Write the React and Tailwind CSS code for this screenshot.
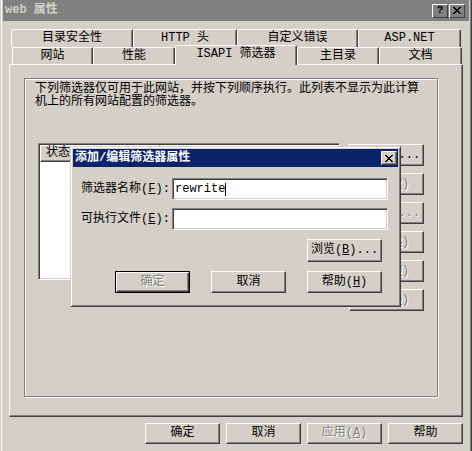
import React from "react";

const raised =
  "border border-t-white border-l-white border-r-[#404040] border-b-[#404040] shadow-[inset_-1px_-1px_0_#808080]";
const sunken =
  "border border-t-[#808080] border-l-[#808080] border-r-white border-b-white shadow-[inset_1px_1px_0_#404040,inset_-1px_-1px_0_#d4d0c8]";
const grayText = "text-[#808080] [text-shadow:1px_1px_0_#fff]";

const Key = ({ k }) => (
  <>
    (<span className="underline">{k}</span>)
  </>
);

// 经典 Win2000 按钮
const Btn = ({ children, w = "w-[75px]", h = "h-[22px]", disabled, isDefault }) => (
  <div
    className={
      `${w} ${h} flex items-center justify-center shrink-0 whitespace-nowrap ` +
      (isDefault
        ? "border border-black shadow-[inset_1px_1px_0_#fff,inset_-1px_-1px_0_#404040,inset_-2px_-2px_0_#808080] "
        : raised + " ") +
      (disabled ? grayText : "text-black")
    }
  >
    {children}
  </div>
);

const tab =
  "flex items-center justify-center shrink-0 bg-[#d4d0c8] border-l border-t border-r border-l-white border-t-white border-r-[#404040] shadow-[inset_-1px_0_0_#808080] rounded-t-[2px]";

const CloseGlyph = () => (
  <svg width="8" height="7" viewBox="0 0 8 7" shapeRendering="crispEdges">
    <path d="M0 0h2v1h1v1h2V1h1V0h2v1H7v1H6v1H5v1h1v1h1v1h1v1H6V6H5V5H3v1H2v1H0V6h1V5h1V4h1V3H2V2H1V1H0z" fill="#000" />
  </svg>
);

export default function App() {
  return (
    <div className="relative w-[472px] h-[451px] overflow-hidden bg-[#d4d0c8] text-[12px] leading-[13px] text-black font-[family-name:'Liberation_Mono','Noto_Sans_CJK_SC',monospace] shadow-[inset_1px_0_0_#d4d0c8,inset_2px_0_0_#fff,inset_-1px_0_0_#404040,inset_-2px_0_0_#808080]">
      {/* 标题栏 (非活动) */}
      <div className="mx-[3px] h-[21px] bg-[#808080] flex items-center justify-between pl-[2px] pr-[4px]">
        <span className="font-bold text-[#d4d0c8]">web 属性</span>
        <div className="flex gap-[1px]">
          <div className={`${raised} w-[16px] h-[14px] flex items-center justify-center font-bold text-[11px] leading-none`}>?</div>
          <div className={`${raised} w-[16px] h-[14px] flex items-center justify-center`}>
            <CloseGlyph />
          </div>
        </div>
      </div>

      <div className="ml-[9px] w-[454px]">
        {/* 选项卡 第一行 */}
        <div className="mt-[8px] flex ml-[2px] h-[18px]">
          <div className={`${tab} w-[122px]`}>目录安全性</div>
          <div className={`${tab} w-[104px]`}>HTTP 头</div>
          <div className={`${tab} w-[121px]`}>自定义错误</div>
          <div className={`${tab} w-[103px]`}>ASP.NET</div>
        </div>
        {/* 选项卡 第二行 */}
        <div className="flex items-end ml-[3px] h-[17px]">
          <div className={`${tab} w-[81px] h-[17px]`}>网站</div>
          <div className={`${tab} w-[82px] h-[17px]`}>性能</div>
          <div className={`${tab} w-[122px] h-[20px] -mb-[1px] relative z-10 pb-[2px]`}>ISAPI 筛选器</div>
          <div className={`${tab} w-[82px] h-[17px]`}>主目录</div>
          <div className={`${tab} w-[83px] h-[17px]`}>文档</div>
        </div>

        {/* 面板 */}
        <div className={`${raised} h-[353px]`}>
          <div className="ml-[14px] mt-[13px] w-[414px] h-[319px] border border-[#808080] shadow-[1px_1px_0_#fff,inset_1px_1px_0_#fff]">
            <p className="pl-[10px] pt-[4px]">
              下列筛选器仅可用于此网站，并按下列顺序执行。此列表不显示为此计算
              <br />
              机上的所有网站配置的筛选器。
            </p>
            <div className="mt-[34px] pl-[13px] flex gap-[9px] items-start">
              <div className={`${sunken} w-[302px] h-[137px] bg-white p-[1px]`}>
                <div className={`${raised} bg-[#d4d0c8] w-[120px] h-[17px] flex items-center pl-[5px]`}>状态</div>
              </div>
              <div className="mt-[1px] flex flex-col gap-[7px]">
                <Btn>添加<Key k="D" />...</Btn>
                <Btn disabled>删除<Key k="R" /></Btn>
                <Btn disabled>编辑<Key k="I" />...</Btn>
                <Btn disabled>禁用<Key k="B" /></Btn>
                <Btn disabled>上移<Key k="U" /></Btn>
                <Btn disabled>下移<Key k="O" /></Btn>
              </div>
            </div>
          </div>
        </div>

        {/* 底部按钮 */}
        <div className="mt-[6px] flex justify-end gap-[6px]">
          <Btn h="h-[21px]">确定</Btn>
          <Btn h="h-[21px]">取消</Btn>
          <Btn h="h-[21px]" disabled>应用<Key k="A" /></Btn>
          <Btn h="h-[21px]">帮助</Btn>
        </div>
      </div>

      {/* 添加/编辑筛选器属性 对话框 */}
      <div className="absolute left-[70px] top-[146px] w-[331px] h-[161px] bg-[#d4d0c8] p-[2px] border border-t-[#d4d0c8] border-l-[#d4d0c8] border-r-[#404040] border-b-[#404040] shadow-[inset_1px_1px_0_#fff,inset_-1px_-1px_0_#808080] z-20">
        <div className="h-[18px] bg-[#0a246a] flex items-center justify-between pl-[2px] pr-[1px]">
          <span className="font-bold text-white">添加/编辑筛选器属性</span>
          <div className={`${raised} bg-[#d4d0c8] w-[16px] h-[14px] flex items-center justify-center`}>
            <CloseGlyph />
          </div>
        </div>
        <div className="pl-[8px]">
          <div className="mt-[11px] flex items-center">
            <span className="w-[91px]">筛选器名称<Key k="F" />:</span>
            <div className={`${sunken} w-[216px] h-[22px] bg-white flex items-center pl-[2px]`}>
              <span>rewrite</span>
              <span className="w-[1px] h-[13px] bg-black" />
            </div>
          </div>
          <div className="mt-[8px] flex items-center">
            <span className="w-[91px]">可执行文件<Key k="E" />:</span>
            <div className={`${sunken} w-[216px] h-[22px] bg-white`} />
          </div>
          <div className="mt-[9px] pl-[226px]">
            <Btn h="h-[23px]">浏览<Key k="B" />...</Btn>
          </div>
          <div className="mt-[9px] pl-[34px] flex gap-[21px]">
            <Btn disabled isDefault>确定</Btn>
            <Btn>取消</Btn>
            <Btn>帮助<Key k="H" /></Btn>
          </div>
        </div>
      </div>
    </div>
  );
}
